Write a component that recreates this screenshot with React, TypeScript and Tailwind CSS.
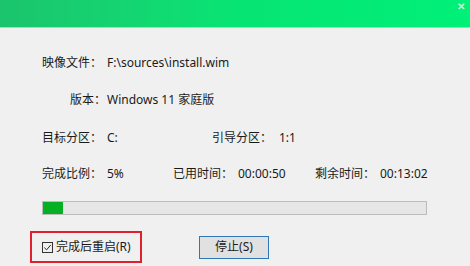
export default function App() {
  const font = { fontFamily: '"Noto Sans", "Noto Sans CJK SC", sans-serif' };
  return (
    <div className="w-[470px] h-[266px] bg-[#f0f0f0] overflow-hidden text-[12px] text-[#1a1a1a] font-['Noto_Sans','Noto_Sans_CJK_SC',sans-serif]">
      <div className="relative h-[28px] bg-gradient-to-r from-[#1bc46d] via-[#07e474] to-[#00f078] border-b border-[#7ff0b4]">
        <span className="absolute right-[5px] top-[1px] text-[10px] leading-none text-[#c8f5dc] font-bold">✕</span>
      </div>
      <div className="pl-[42px] pt-[25px]">
        <div className="flex h-[20px] items-center">
          <span className="w-[65px]">映像文件：</span>
          <span>F:\sources\install.wim</span>
        </div>
        <div className="flex h-[20px] items-center mt-[17px]">
          <span className="w-[65px] text-right pr-[1px]">版本：</span>
          <span>Windows 11 家庭版</span>
        </div>
        <div className="flex h-[20px] items-center mt-[18px]">
          <span className="w-[65px]">目标分区：</span>
          <span className="w-[105px]">C:</span>
          <span className="w-[67px]">引导分区：</span>
          <span>1:1</span>
        </div>
        <div className="flex h-[20px] items-center mt-[16px]">
          <span className="w-[65px]">完成比例：</span>
          <span className="w-[66px]">5%</span>
          <span className="w-[65px]">已用时间：</span>
          <span className="w-[77px]">00:00:50</span>
          <span className="w-[65px]">剩余时间：</span>
          <span>00:13:02</span>
        </div>
        <div className="mt-[17px] w-[385px] h-[14px] border border-[#bcbcbc] bg-[#e6e6e6]">
          <div className="h-full w-[20px] bg-[#06b025]" />
        </div>
      </div>
      <div className="flex items-center mt-[16px]">
        <div className="ml-[30px] w-[112px] h-[32px] border-2 border-[#e0202a] flex items-center pl-[10px]">
          <span className="w-[11px] h-[11px] border border-[#333] flex items-center justify-center mr-[3px]">
            <svg viewBox="0 0 10 10" className="w-[9px] h-[9px]">
              <path d="M1.5 5.2 L4 7.6 L8.6 2.2" fill="none" stroke="#222" strokeWidth="1.1" />
            </svg>
          </span>
          <span>完成后重启(R)</span>
        </div>
        <button className="ml-[57px] w-[70px] h-[23px] border border-[#2f78b8] bg-[#e1e1e1] flex items-center justify-center text-[12px] text-[#1a1a1a]" style={font}>
          <span className="px-[1px]">停止(S)</span>
        </button>
      </div>
    </div>
  );
}
